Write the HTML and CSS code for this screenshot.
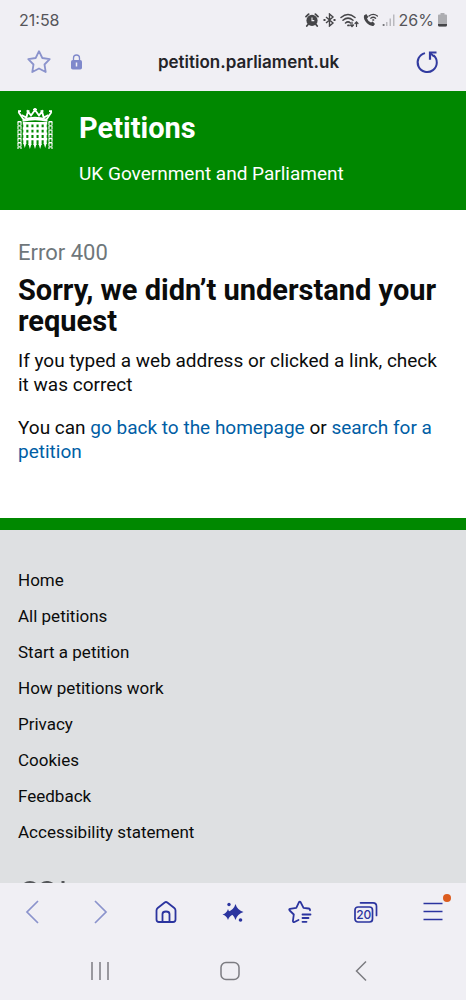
FILE: index.html
```html
<!DOCTYPE html>
<html lang="en">
<head>
<meta charset="utf-8">
<meta name="viewport" content="width=device-width, initial-scale=1">
<title>Error 400 - Petitions</title>
<link rel="stylesheet" href="styles.css">
</head>
<body class="phone">
<div class="top">
  <div class="status">
    <time class="clock">21:58</time>
    <div class="status-icons">
      <svg width="14" height="14" viewBox="0 0 14 14" aria-hidden="true"><circle cx="7" cy="7.400" r="5.600" fill="#454548"/><path d="M1 3.600 3.600 1.200M13 3.600 10.400 1.200M3 11.500 1.800 13M11 11.500 12.200 13" stroke="#454548" stroke-width="1.800" stroke-linecap="round"/><path d="M7 4.600V7.600H9.300" fill="none" stroke="#f0eff4" stroke-width="1.100"/></svg>
      <svg width="13" height="14" viewBox="0 0 13 14" fill="none" stroke="#454548" stroke-width="1.400" aria-hidden="true"><path d="M3 4 10 10 6.500 13V1L10 4 3 10"/><path d="M.5 7H2.500M10.500 7h2" stroke-width="1.800"/></svg>
      <svg width="19" height="15" viewBox="0 0 19 15" fill="none" stroke="#454548" stroke-width="1.500" stroke-linecap="round" aria-hidden="true"><path d="M1 4.500Q8 -1.500 15 4.500M3 7.300Q8 3 13 7.300M5.500 10Q8 7.800 10.500 10"/><path d="M8 12.400h1" stroke-width="1.800"/><path d="M12 9v4.500M10.500 12l1.500 1.700L13.500 12M16.500 13.500V9M15 10.500l1.500-1.700L18 10.500" stroke-width="1.200"/></svg>
      <svg width="15" height="14" viewBox="0 0 15 14" aria-hidden="true"><path d="M1 2.500 3.300 1 5.300 4 4 5.600Q5 8.500 8 9.600L9.700 8.500 12 11 10.400 12.900Q7.500 13.600 4 10.200Q.2 6.500 1 2.500Z" fill="#454548"/><path d="M6 3Q10.200-.2 14.400 3M7.800 5.200Q10.200 3.300 12.600 5.200M9.800 7h.9" fill="none" stroke="#454548" stroke-width="1.300" stroke-linecap="round"/></svg>
      <svg width="13" height="14" viewBox="0 0 13 14" aria-hidden="true"><path d="M.7 11h1.800v2H.7z" fill="#77777b"/><path d="M4 9h1.500v4H4zM7.500 5.500H9V13H7.500zM11 1.500h1.500V13H11z" fill="#b9b9be"/></svg>
      <span class="percent">26%</span>
      <svg width="9" height="14" viewBox="0 0 9 14" aria-hidden="true"><path d="M2.500 0h4v1.500H8q1 0 1 1V12q0 1.500-1.500 1.500h-6Q0 13.500 0 12V2.500q0-1 1-1h1.500z" fill="#adadb1"/><path d="M0 11h9v1q0 1.500-1.500 1.500h-6Q0 13.500 0 12z" fill="#454548"/></svg>
    </div>
  </div>
  <div class="address">
    <button class="icon-button" aria-label="Bookmark this page"><svg width="24" height="24" viewBox="0 0 24 24" fill="none" stroke="#8b93cc" stroke-width="1.800" stroke-linejoin="round" aria-hidden="true"><path d="M12 1.200 15.300 8 22.700 9.200 17.500 14.500 18.700 22 12 18.500 5.300 22 6.500 14.500 1.300 9.200 8.700 8Z"/></svg></button>
    <button class="icon-button" aria-label="Connection is secure"><svg width="11" height="16" viewBox="0 0 11 16" aria-hidden="true"><path d="M2.500 7V4a3 3 0 0 1 6 0v3" fill="none" stroke="#7f88cb" stroke-width="1.300"/><rect y="6" width="11" height="9.500" rx="1.800" fill="#7f88cb"/><path d="M5.500 8.500v4" stroke="#f0eff4" stroke-width="1.500"/></svg></button>
    <span class="url">petition.parliament.uk</span>
    <button class="icon-button" aria-label="Reload"><svg width="24" height="24" viewBox="0 0 24 24" fill="none" stroke="#323ba0" stroke-width="2" aria-hidden="true"><path d="M10 3.100A9.600 9.600 0 1 0 18.500 5.200"/><path d="M21.500 2.500H15v7.300" stroke-width="2.200"/><path d="M15 2.800 19 6.400"/></svg></button>
  </div>
</div>

<div class="page">
  <header class="site-header">
    <svg class="portcullis" width="36" height="42" viewBox="0 0 36 42" fill="none" stroke="#fff" aria-hidden="true">
      <path d="M1.500 4 6.500 11.500Q18 8 29.500 11.500L34.500 4" stroke-width="1.800"/>
      <path d="M4.500 7 9.300 9.500 11 3.500 14 7.500 18 2 22 7.500 25 3.500 26.700 9.500 31.500 7" stroke-width="1.900"/>
      <path d="M18 0v4M16 1.500h4M1 3.200h3M9.500 3h3M23.500 3h3M32 3.200h3" stroke-width="1.700"/>
      <path d="M5.500 13Q18 9.500 30.500 13" stroke-width="1.800"/>
      <path d="M5.800 15.200H30.200M5.800 20.500H30.200M5.800 25.800H30.200M5.800 31.100H30.200" stroke-width="2.400"/>
      <path d="M7.800 14V36M12.900 14V37M18 14V37M23.100 14V37M28.200 14V36" stroke-width="3"/>
      <path d="M6.300 35h3L7.800 40ZM11.400 36h3L12.900 41ZM16.500 36h3L18 41ZM21.600 36h3L23.100 41ZM26.700 35h3L28.200 40Z" fill="#fff" stroke="none"/>
      <path d="M2.500 13v28M33.500 13v28" stroke-width="3.800" stroke-dasharray="1.400 2.800"/>
      <path d="M1 14v27M4 14v27M32 14v27M35 14v27" stroke-width="1.100" stroke-dasharray="3 1.200"/>
    </svg>
    <div>
      <a class="site-title" href="#">Petitions</a>
      <p class="site-tagline">UK Government and Parliament</p>
    </div>
  </header>
  <main class="content">
    <p class="error-code">Error 400</p>
    <h1 class="title">Sorry, we didn’t understand your request</h1>
    <p class="text">If you typed a web address or clicked a link, check it was correct</p>
    <p class="text">You can <a class="link" href="#">go back to the homepage</a> or <a class="link" href="#">search for a petition</a></p>
  </main>
  <footer class="footer">
    <ul class="footer-links">
      <li><a href="#">Home</a></li>
      <li><a href="#">All petitions</a></li>
      <li><a href="#">Start a petition</a></li>
      <li><a href="#">How petitions work</a></li>
      <li><a href="#">Privacy</a></li>
      <li><a href="#">Cookies</a></li>
      <li><a href="#">Feedback</a></li>
      <li><a href="#">Accessibility statement</a></li>
    </ul>
    <svg class="licence" width="50" height="20" viewBox="0 0 50 20" fill="none" stroke="#55575a" stroke-width="3" role="img" aria-label="Open Government Licence"><circle cx="10" cy="10" r="8.500"/><path d="M34 5A8.500 8.500 0 1 0 34 15V10H29M43 0V18H50"/></svg>
  </footer>
</div>

<div class="bottom">
  <nav class="toolbar" aria-label="Browser">
    <button class="icon-button" aria-label="Back"><svg width="24" height="24" viewBox="0 0 24 24" fill="none" stroke="#8b93cc" stroke-width="1.700" aria-hidden="true"><path d="M17 1 6 12 17 23"/></svg></button>
    <button class="icon-button" aria-label="Forward"><svg width="24" height="24" viewBox="0 0 24 24" fill="none" stroke="#8b93cc" stroke-width="1.700" aria-hidden="true"><path d="M7 1 18 12 7 23"/></svg></button>
    <button class="icon-button" aria-label="Home page"><svg width="24" height="24" viewBox="0 0 24 24" fill="none" stroke="#2b349f" stroke-width="1.800" stroke-linejoin="round" aria-hidden="true"><path d="M2.500 10.500Q2.500 9 3.700 8L10.700 2.500Q12 1.500 13.300 2.500L20.300 8Q21.500 9 21.500 10.500V19.500Q21.500 22 19 22H5Q2.500 22 2.500 19.500Z"/><path d="M8.500 22V14Q8.500 11.500 12 11.500T15.500 14V22"/></svg></button>
    <button class="icon-button" aria-label="Assistant"><svg width="24" height="24" viewBox="0 0 24 24" fill="#2b349f" aria-hidden="true"><path d="M14.500 4Q16.300 10.200 22.500 12 16.300 13.800 14.500 20 12.700 13.800 6.500 12 12.700 10.200 14.500 4Z"/><path d="M7 9Q8.300 13.200 12.500 14.500 8.300 15.800 7 20 5.700 15.800 1.500 14.500 5.700 13.200 7 9Z"/><circle cx="8" cy="4.500" r="1.700"/><circle cx="19.500" cy="20" r="1.800"/></svg></button>
    <button class="icon-button" aria-label="Bookmarks"><svg width="24" height="24" viewBox="0 0 24 24" fill="none" stroke="#2b349f" stroke-width="1.800" stroke-linejoin="round" stroke-linecap="round" aria-hidden="true"><path d="M22 10.300Q22.300 8.800 20.500 8.500L15.500 7.800 12.700 2.300Q11.800.8 10.900 2.300L8.300 7.800 2 8.800Q.6 9.300 1.700 10.500L5.800 14.500 4.900 21Q5 22.600 6.500 22L10.500 20"/><path d="M14.500 14.500h8M14.500 18h6M14.500 21.800h4"/></svg></button>
    <button class="icon-button" aria-label="20 open tabs"><svg width="24" height="24" viewBox="0 0 24 24" fill="none" stroke="#2b349f" stroke-width="1.700" stroke-linecap="round" aria-hidden="true"><rect x="1" y="7" width="17.500" height="15" rx="3"/><path d="M6.500 2.800H19Q22.500 2.800 22.500 6.300V15.500"/><text class="tab-count" x="9.800" y="19" text-anchor="middle">20</text></svg></button>
    <button class="icon-button menu-button" aria-label="Menu"><svg width="24" height="24" viewBox="0 0 24 24" fill="none" stroke="#2b349f" stroke-width="1.700" aria-hidden="true"><path d="M2.500 3.500h19M2.500 11.500h19M2.500 19.500h19"/></svg><span class="dot"></span></button>
  </nav>
  <nav class="system" aria-label="System">
    <button class="icon-button" aria-label="Recent apps"><svg width="24" height="24" viewBox="0 0 24 24" stroke="#7c7c81" stroke-width="1.500" aria-hidden="true"><path d="M4 3v18M12 3v18M20 3v18"/></svg></button>
    <button class="icon-button" aria-label="Home screen"><svg width="24" height="24" viewBox="0 0 24 24" fill="none" stroke="#7c7c81" stroke-width="1.500" aria-hidden="true"><rect x="3" y="3.500" width="18" height="17" rx="5"/></svg></button>
    <button class="icon-button" aria-label="Go back"><svg width="24" height="24" viewBox="0 0 24 24" fill="none" stroke="#7c7c81" stroke-width="1.500" aria-hidden="true"><path d="M17 2.500 7.500 12 17 21.500"/></svg></button>
  </nav>
</div>
</body>
</html>
```

FILE: styles.css
```css
* {
  box-sizing: border-box;
}

.phone {
  margin: 0;
  height: 100vh;
  display: flex;
  flex-direction: column;
  font-family: Roboto, "Liberation Sans", sans-serif;
  font-size: 19px;
  color: #0b0c0c;
  background: #fff;
}

.top,
.bottom {
  flex: none;
  background: #f0eff4;
}

.status {
  display: flex;
  align-items: center;
  justify-content: space-between;
  padding: 8px 19px;
  line-height: 24px;
  color: #55555a;
}

.clock,
.percent {
  font-family: Inter, Roboto, sans-serif;
  font-size: 16px;
}

.status-icons {
  display: flex;
  align-items: center;
  gap: 4px;
}

.address {
  display: flex;
  align-items: center;
  gap: 20px;
  height: 51px;
  padding: 0 27px 8px;
}

.url {
  flex: 1;
  text-align: center;
  font-family: Inter, Roboto, sans-serif;
  font-size: 17px;
  font-weight: 600;
  color: #242428;
}

.icon-button {
  display: flex;
  align-items: center;
  justify-content: center;
  padding: 0;
  border: 0;
  background: none;
}

.page {
  flex: 1;
  min-height: 0;
  overflow: hidden;
}

.site-header {
  display: flex;
  align-items: flex-start;
  gap: 26px;
  padding: 17px 17px 24px;
  color: #fff;
  background: #008800;
}

.site-title {
  display: block;
  color: inherit;
  font-size: 29px;
  font-weight: 700;
  line-height: 41px;
  text-decoration: none;
}

.site-tagline {
  margin: 13px 0 0;
  line-height: 24px;
}

.content {
  padding: 30px 18px 54px;
}

.error-code {
  margin: 0;
  font-size: 22px;
  line-height: 26px;
  color: #6f777b;
}

.title {
  margin: 9px 0 12px;
  font-size: 29px;
  font-weight: 700;
  line-height: 31px;
}

.text {
  margin: 0 0 19px;
  line-height: 24px;
}

.text:last-child {
  margin-bottom: 0;
}

.link {
  color: #005ea5;
  text-decoration: none;
}

.footer {
  padding: 38px 18px 48px;
  border-top: 12px solid #008800;
  background: #dee0e2;
}

.footer-links {
  margin: 0 0 37px;
  padding: 0;
  display: grid;
  gap: 12px;
  list-style: none;
  font-size: 17px;
  line-height: 24px;
}

.footer-links a {
  color: inherit;
  text-decoration: none;
}

.licence {
  display: block;
  margin-left: 2px;
}

.toolbar {
  display: grid;
  grid-template-columns: repeat(7, 1fr);
  height: 58px;
}

.system {
  display: grid;
  grid-template-columns: repeat(3, 1fr);
  height: 59px;
  padding: 0 40px 0 35px;
}

.tab-count {
  font-family: Inter, Roboto, sans-serif;
  font-size: 12px;
  font-weight: 500;
  fill: #2b349f;
  stroke: none;
}

.menu-button {
  position: relative;
}

.dot {
  position: absolute;
  top: 11px;
  right: 15px;
  width: 8px;
  height: 8px;
  border-radius: 50%;
  background: #dc5c1e;
}
```
